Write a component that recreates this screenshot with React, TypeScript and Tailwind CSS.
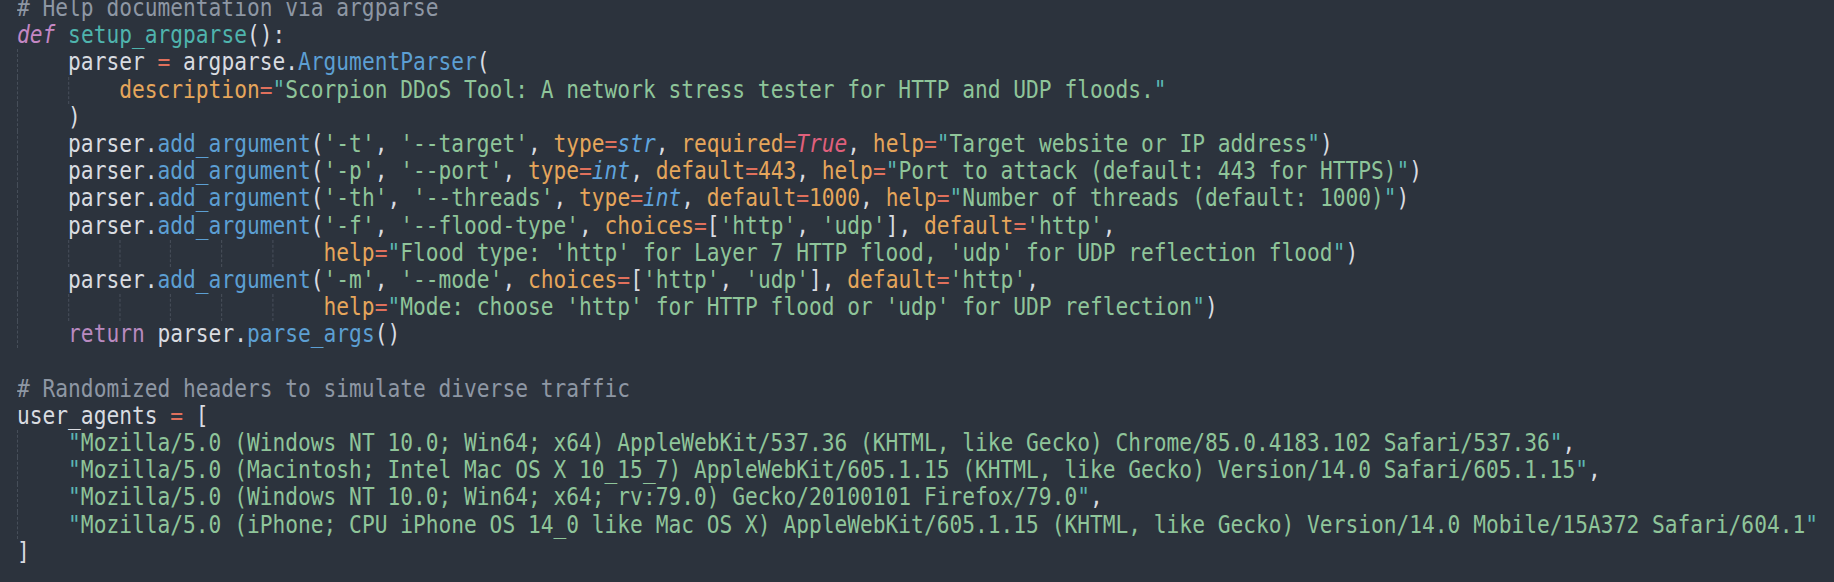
type Tok = [string, string];

const colors: Record<string, string> = {
  c: "text-[#8e97a4]",
  k: "text-[#c487c4] italic",
  r: "text-[#b98ac0]",
  f: "text-[#4fb4ad]",
  p: "text-[#d9dce1]",
  o: "text-[#e0705c]",
  m: "text-[#5c9fd3]",
  a: "text-[#e6a65b]",
  s: "text-[#8fc59a]",
  q: "text-[#5bb7b3]",
  t: "text-[#e0607c] italic",
  b: "text-[#5fa4de] italic",
  n: "text-[#e6a65b]",
};

const str = (s: string): Tok[] => [["q", '"'], ["s", s], ["q", '"']];

const lines: { guides: number; indent: number; toks: Tok[] }[] = [
  { guides: 0, indent: 0, toks: [["c", "# Help documentation via argparse"]] },
  { guides: 0, indent: 0, toks: [["k", "def"], ["p", " "], ["f", "setup_argparse"], ["p", "():"]] },
  {
    guides: 1,
    indent: 4,
    toks: [["p", "parser "], ["o", "="], ["p", " argparse."], ["m", "ArgumentParser"], ["p", "("]],
  },
  {
    guides: 2,
    indent: 8,
    toks: [
      ["a", "description"],
      ["o", "="],
      ...str("Scorpion DDoS Tool: A network stress tester for HTTP and UDP floods."),
    ],
  },
  { guides: 1, indent: 4, toks: [["p", ")"]] },
  {
    guides: 1,
    indent: 4,
    toks: [
      ["p", "parser."], ["m", "add_argument"], ["p", "("], ["s", "'-t'"], ["p", ", "], ["s", "'--target'"], ["p", ", "],
      ["a", "type"], ["o", "="], ["b", "str"], ["p", ", "], ["a", "required"], ["o", "="], ["t", "True"], ["p", ", "],
      ["a", "help"], ["o", "="], ...str("Target website or IP address"), ["p", ")"],
    ],
  },
  {
    guides: 1,
    indent: 4,
    toks: [
      ["p", "parser."], ["m", "add_argument"], ["p", "("], ["s", "'-p'"], ["p", ", "], ["s", "'--port'"], ["p", ", "],
      ["a", "type"], ["o", "="], ["b", "int"], ["p", ", "], ["a", "default"], ["o", "="], ["n", "443"], ["p", ", "],
      ["a", "help"], ["o", "="], ...str("Port to attack (default: 443 for HTTPS)"), ["p", ")"],
    ],
  },
  {
    guides: 1,
    indent: 4,
    toks: [
      ["p", "parser."], ["m", "add_argument"], ["p", "("], ["s", "'-th'"], ["p", ", "], ["s", "'--threads'"], ["p", ", "],
      ["a", "type"], ["o", "="], ["b", "int"], ["p", ", "], ["a", "default"], ["o", "="], ["n", "1000"], ["p", ", "],
      ["a", "help"], ["o", "="], ...str("Number of threads (default: 1000)"), ["p", ")"],
    ],
  },
  {
    guides: 1,
    indent: 4,
    toks: [
      ["p", "parser."], ["m", "add_argument"], ["p", "("], ["s", "'-f'"], ["p", ", "], ["s", "'--flood-type'"], ["p", ", "],
      ["a", "choices"], ["o", "="], ["p", "["], ["s", "'http'"], ["p", ", "], ["s", "'udp'"], ["p", "], "],
      ["a", "default"], ["o", "="], ["s", "'http'"], ["p", ","],
    ],
  },
  {
    guides: 6,
    indent: 24,
    toks: [
      ["a", "help"], ["o", "="],
      ...str("Flood type: 'http' for Layer 7 HTTP flood, 'udp' for UDP reflection flood"), ["p", ")"],
    ],
  },
  {
    guides: 1,
    indent: 4,
    toks: [
      ["p", "parser."], ["m", "add_argument"], ["p", "("], ["s", "'-m'"], ["p", ", "], ["s", "'--mode'"], ["p", ", "],
      ["a", "choices"], ["o", "="], ["p", "["], ["s", "'http'"], ["p", ", "], ["s", "'udp'"], ["p", "], "],
      ["a", "default"], ["o", "="], ["s", "'http'"], ["p", ","],
    ],
  },
  {
    guides: 6,
    indent: 24,
    toks: [
      ["a", "help"], ["o", "="],
      ...str("Mode: choose 'http' for HTTP flood or 'udp' for UDP reflection"), ["p", ")"],
    ],
  },
  {
    guides: 1,
    indent: 4,
    toks: [["r", "return"], ["p", " parser."], ["m", "parse_args"], ["p", "()"]],
  },
  { guides: 0, indent: 0, toks: [] },
  { guides: 0, indent: 0, toks: [["c", "# Randomized headers to simulate diverse traffic"]] },
  { guides: 0, indent: 0, toks: [["p", "user_agents "], ["o", "="], ["p", " ["]] },
  {
    guides: 1,
    indent: 4,
    toks: [
      ...str("Mozilla/5.0 (Windows NT 10.0; Win64; x64) AppleWebKit/537.36 (KHTML, like Gecko) Chrome/85.0.4183.102 Safari/537.36"),
      ["p", ","],
    ],
  },
  {
    guides: 1,
    indent: 4,
    toks: [
      ...str("Mozilla/5.0 (Macintosh; Intel Mac OS X 10_15_7) AppleWebKit/605.1.15 (KHTML, like Gecko) Version/14.0 Safari/605.1.15"),
      ["p", ","],
    ],
  },
  {
    guides: 1,
    indent: 4,
    toks: [...str("Mozilla/5.0 (Windows NT 10.0; Win64; x64; rv:79.0) Gecko/20100101 Firefox/79.0"), ["p", ","]],
  },
  {
    guides: 1,
    indent: 4,
    toks: [
      ...str("Mozilla/5.0 (iPhone; CPU iPhone OS 14_0 like Mac OS X) AppleWebKit/605.1.15 (KHTML, like Gecko) Version/14.0 Mobile/15A372 Safari/604.1"),
    ],
  },
  { guides: 0, indent: 0, toks: [["p", "]"]] },
];

function CodeLine({ guides, indent, toks }: { guides: number; indent: number; toks: Tok[] }) {
  const rest = indent - guides * 4;
  return (
    <div className="flex h-[27.2px] items-center whitespace-pre">
      {Array.from({ length: guides }).map((_, i) => (
        <span key={i} className="self-stretch w-[4ch] shrink-0 border-l border-dashed border-[#4a525e]" />
      ))}
      {rest > 0 && <span>{" ".repeat(rest)}</span>}
      {toks.map(([kind, text], i) => (
        <span key={i} className={colors[kind]}>
          {text}
        </span>
      ))}
    </div>
  );
}

export default function App() {
  return (
    <div className="h-[582px] w-full overflow-hidden bg-[#2c333d] pl-[17px]">
      <div className="-mt-[5px] origin-top-left scale-x-[0.884] font-['DejaVu_Sans_Mono',monospace] text-[24px] leading-[27.2px]">
        {lines.map((l, i) => (
          <CodeLine key={i} {...l} />
        ))}
      </div>
    </div>
  );
}
